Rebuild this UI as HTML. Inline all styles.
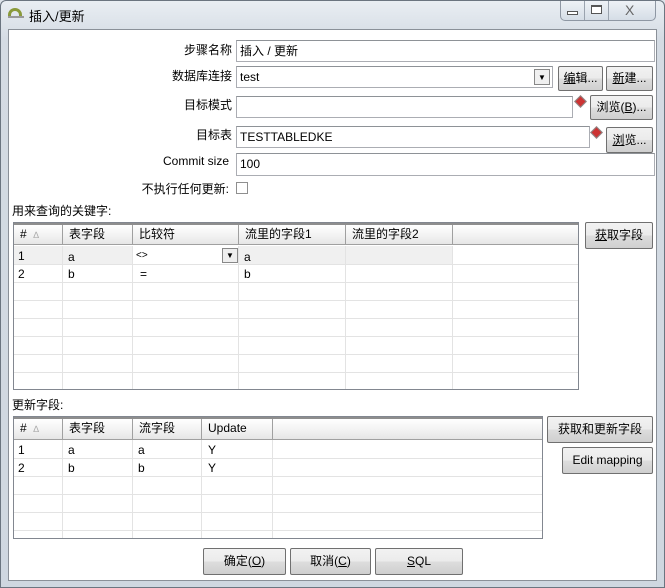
<!DOCTYPE html>
<html><head><meta charset="utf-8"><style>
*{box-sizing:border-box}
body{margin:0;width:665px;height:588px;overflow:hidden;background:#dde3ea;font-family:"Liberation Sans","Noto Sans CJK SC",sans-serif;font-size:12px;color:#000;position:relative}
.a{position:absolute}
.frame{left:0;top:0;width:665px;height:588px;background:linear-gradient(#e9eef3,#d4dbe3 40px,#cfd7e0);border:1px solid #6b7580;border-radius:6px 6px 0 0}
.client{left:8px;top:29px;width:649px;height:552px;background:#fff;border:1px solid #8a9098}
.lbl{text-align:right;white-space:nowrap}
.in{background:#fff;border:1px solid #abadb3;border-top-color:#8e9297;padding-left:3px;line-height:21px;white-space:nowrap}
.btn{border:1px solid #707070;border-radius:2px;background:linear-gradient(#f2f2f2,#ebebeb 50%,#dddddd 51%,#cfcfcf);text-align:center;white-space:nowrap}
.tbl{border:1px solid #828790;background:#fff;overflow:hidden}
.hd{background:linear-gradient(#fff,#f1f1f1 60%,#e6e6e6);border-bottom:1px solid #a0a0a0;border-top:2px solid #8e8e8e}
.hc{position:absolute;top:0;height:20px;border-right:1px solid #a0a0a0;padding-left:6px;line-height:19px}
.hl{position:absolute;left:0;right:0;height:1px;background:#e3e3e3}
.vl{position:absolute;width:1px;background:#e3e3e3}
.cell{position:absolute;line-height:20px}
u{text-decoration:underline}
.diamond{width:9px;height:9px;background:#c33;transform:rotate(45deg);border:1px solid #888}
</style></head><body>
<div class="a frame"></div>
<div class="a" style="left:8px;top:8px;width:14px;height:10px;border:3px solid #8a9a3a;border-bottom:none;border-radius:7px 7px 0 0"></div>
<div class="a" style="left:8px;top:16px;width:16px;height:2px;background:#999"></div>
<div class="a" style="left:29px;top:6px;font-size:13px">插入/更新</div>
<div class="a" style="left:560px;top:1px;width:96px;height:20px;border:1px solid #8e97a3;border-top:none;border-radius:0 0 5px 5px;background:linear-gradient(#eef2f6,#d5dde6)"></div>
<div class="a" style="left:584px;top:1px;width:1px;height:19px;background:#9aa3ae"></div>
<div class="a" style="left:608px;top:1px;width:1px;height:19px;background:#9aa3ae"></div>
<div class="a" style="left:567px;top:11px;width:11px;height:4px;border:1px solid #555;background:#fff"></div>
<div class="a" style="left:591px;top:5px;width:11px;height:9px;border:1px solid #555;border-top-width:2px;background:#fff"></div>
<div class="a" style="left:625px;top:2px;font-size:14px;color:#666">X</div>
<div class="a client"></div>

<div class="a lbl" style="right:433px;top:41px">步骤名称</div>
<div class="a in" style="left:236px;top:40px;width:419px;height:22px">插入 / 更新</div>

<div class="a lbl" style="right:433px;top:67px">数据库连接</div>
<div class="a in" style="left:236px;top:66px;width:317px;height:22px">test</div>
<div class="a" style="left:534px;top:69px;width:16px;height:16px;border:1px solid #888;background:#f0f0f0;font-size:8px;text-align:center;line-height:15px">▼</div>
<div class="a btn" style="left:558px;top:66px;width:45px;height:25px;line-height:23px"><u>编</u>辑...</div>
<div class="a btn" style="left:606px;top:66px;width:47px;height:25px;line-height:23px"><u>新</u>建...</div>

<div class="a lbl" style="right:433px;top:96px">目标模式</div>
<div class="a in" style="left:236px;top:96px;width:337px;height:22px"></div>
<div class="a diamond" style="left:576px;top:97px"></div>
<div class="a btn" style="left:590px;top:95px;width:63px;height:25px;line-height:23px">浏览(<u>B</u>)...</div>

<div class="a lbl" style="right:433px;top:126px">目标表</div>
<div class="a in" style="left:236px;top:126px;width:354px;height:22px">TESTTABLEDKE</div>
<div class="a diamond" style="left:592px;top:128px"></div>
<div class="a btn" style="left:606px;top:127px;width:47px;height:26px;line-height:24px"><u>浏</u>览...</div>

<div class="a lbl" style="right:436px;top:154px">Commit size</div>
<div class="a in" style="left:236px;top:153px;width:419px;height:23px">100</div>

<div class="a lbl" style="right:436px;top:180px">不执行任何更新:</div>
<div class="a" style="left:236px;top:182px;width:12px;height:12px;border:1px solid #8f8f8f;background:#fff"></div>

<div class="a" style="left:12px;top:202px">用来查询的关键字:</div>
<div class="a tbl" style="left:13px;top:222px;width:566px;height:168px">
 <div class="a hd" style="left:0;top:0;width:566px;height:22px">
  <div class="hc" style="left:0;width:49px">#&nbsp;&nbsp;<span style="color:#aaa;font-size:9px">∆</span></div>
  <div class="hc" style="left:49px;width:70px">表字段</div>
  <div class="hc" style="left:119px;width:106px">比较符</div>
  <div class="hc" style="left:225px;width:107px">流里的字段1</div>
  <div class="hc" style="left:332px;width:107px">流里的字段2</div>
 </div>
 <div class="a" style="left:0;top:23px;width:439px;height:18px;background:#f0f0f0"></div>
 <div class="a" style="left:119px;top:23px;width:106px;height:18px;background:#fff"></div>
 <div class="a" style="left:208px;top:25px;width:16px;height:15px;border:1px solid #888;background:#eee;font-size:8px;text-align:center;line-height:14px">▼</div>
 <div class="hl" style="top:41px"></div><div class="hl" style="top:59px"></div><div class="hl" style="top:77px"></div><div class="hl" style="top:95px"></div><div class="hl" style="top:113px"></div><div class="hl" style="top:131px"></div><div class="hl" style="top:149px"></div>
 <div class="vl" style="left:48px;top:23px;height:150px"></div><div class="vl" style="left:118px;top:23px;height:150px"></div><div class="vl" style="left:224px;top:23px;height:150px"></div><div class="vl" style="left:331px;top:23px;height:150px"></div><div class="vl" style="left:438px;top:23px;height:150px"></div>
 <div class="cell" style="left:4px;top:23px">1</div><div class="cell" style="left:54px;top:24px">a</div><div class="cell" style="left:122px;top:23px;font-size:10px">&lt;&gt;</div><div class="cell" style="left:230px;top:24px">a</div>
 <div class="cell" style="left:4px;top:41px">2</div><div class="cell" style="left:54px;top:41px">b</div><div class="cell" style="left:126px;top:41px">=</div><div class="cell" style="left:230px;top:41px">b</div>
</div>
<div class="a btn" style="left:585px;top:222px;width:68px;height:27px;line-height:25px"><u>获</u>取字段</div>

<div class="a" style="left:12px;top:396px">更新字段:</div>
<div class="a tbl" style="left:13px;top:416px;width:530px;height:123px">
 <div class="a hd" style="left:0;top:0;width:530px;height:23px">
  <div class="hc" style="left:0;width:49px">#&nbsp;&nbsp;<span style="color:#aaa;font-size:9px">∆</span></div>
  <div class="hc" style="left:49px;width:70px">表字段</div>
  <div class="hc" style="left:119px;width:69px">流字段</div>
  <div class="hc" style="left:188px;width:71px">Update</div>
 </div>
 <div class="hl" style="top:41px"></div><div class="hl" style="top:59px"></div><div class="hl" style="top:77px"></div><div class="hl" style="top:95px"></div><div class="hl" style="top:113px"></div>
 <div class="vl" style="left:48px;top:23px;height:100px"></div><div class="vl" style="left:118px;top:23px;height:100px"></div><div class="vl" style="left:187px;top:23px;height:100px"></div><div class="vl" style="left:258px;top:23px;height:100px"></div>
 <div class="cell" style="left:4px;top:23px">1</div><div class="cell" style="left:54px;top:23px">a</div><div class="cell" style="left:124px;top:23px">a</div><div class="cell" style="left:194px;top:23px">Y</div>
 <div class="cell" style="left:4px;top:41px">2</div><div class="cell" style="left:54px;top:41px">b</div><div class="cell" style="left:124px;top:41px">b</div><div class="cell" style="left:194px;top:41px">Y</div>
</div>
<div class="a btn" style="left:547px;top:416px;width:106px;height:27px;line-height:25px">获取和更新字段</div>
<div class="a btn" style="left:562px;top:447px;width:91px;height:27px;line-height:25px">Edit mapping</div>

<div class="a btn" style="left:203px;top:548px;width:83px;height:27px;line-height:25px">确定(<u>O</u>)</div>
<div class="a btn" style="left:290px;top:548px;width:81px;height:27px;line-height:25px">取消(<u>C</u>)</div>
<div class="a btn" style="left:375px;top:548px;width:88px;height:27px;line-height:25px"><u>S</u>QL</div>
</body></html>
